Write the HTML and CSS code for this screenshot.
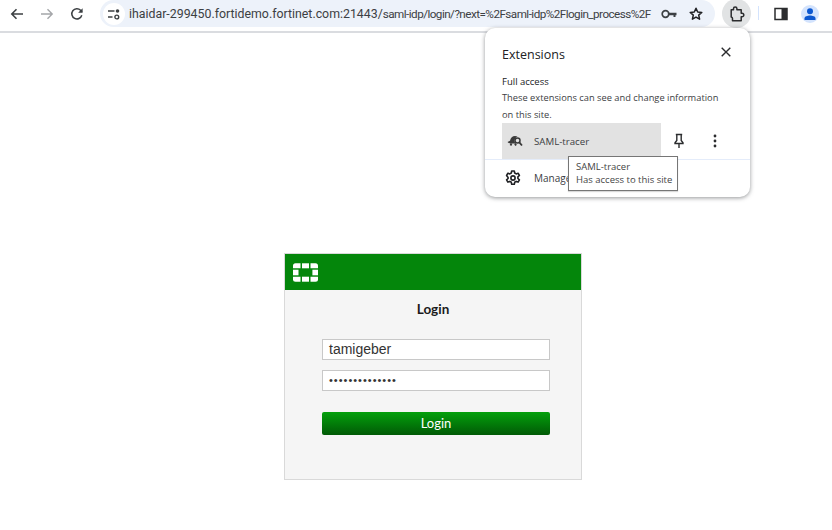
FILE: index.html
```html
<!DOCTYPE html>
<html lang="en">
<head>
<meta charset="utf-8">
<title>Login</title>
<link rel="stylesheet" href="styles.css">
</head>
<body>
<header class="toolbar">
  <button class="tool nav-back" aria-label="Back"><svg width="16" height="16" viewBox="0 0 16 16"><path d="M14 8H3M7.500 3.200 2.800 8l4.700 4.800" fill="none" stroke="#3c4043" stroke-width="1.600"/></svg></button>
  <button class="tool nav-forward" aria-label="Forward"><svg width="16" height="16" viewBox="0 0 16 16"><path d="M2 8h11M8.500 3.200 13.200 8l-4.700 4.800" fill="none" stroke="#a4a6a9" stroke-width="1.400"/></svg></button>
  <button class="tool nav-reload" aria-label="Reload"><svg width="16" height="16" viewBox="0 0 16 16"><path d="M12.800 9.300A5.100 5.100 0 1 1 11.600 4.300L13 5.800" fill="none" stroke="#3c4043" stroke-width="1.500"/><path d="M13.600 2.200v4.500H9.100z" fill="#3c4043"/></svg></button>
  <div class="omnibox">
    <span class="site-info"><svg width="14" height="14" viewBox="0 0 14 14"><path d="M1 4h6.500M1 10h4.500" stroke="#3c4043" stroke-width="1.500" fill="none"/><circle cx="10.500" cy="4" r="1.800" fill="#3c4043"/><circle cx="9.800" cy="10" r="1.900" fill="none" stroke="#3c4043" stroke-width="1.400"/></svg></span>
    <span class="url">ihaidar-299450.fortidemo.fortinet.com:21443/<span class="url-path">saml-idp/login/?next=%2Fsaml-idp%2Flogin_process%2F</span></span>
    <svg class="key" width="16" height="10" viewBox="0 0 16 10"><circle cx="4.500" cy="5" r="3.300" fill="none" stroke="#3c4043" stroke-width="1.700"/><path d="M8 3.800h7.500v2.400h-1v1.800h-2V6.200H8z" fill="#3c4043"/></svg>
    <svg class="star" width="16" height="16" viewBox="0 0 16 16"><path d="M8 2.200 9.700 6l4.100.4-3.100 2.700.9 4.100L8 11.100l-3.600 2.100.9-4.100L2.200 6.400 6.300 6z" fill="none" stroke="#202124" stroke-width="1.500" stroke-linejoin="round"/></svg>
  </div>
  <span class="ext-button"><svg width="18" height="18" viewBox="0 0 18 18"><path d="M3.200 4.800h2.300V3.600a1.700 1.700 0 0 1 3.400 0v1.200h4.300v3.400h.8a1.800 1.800 0 0 1 0 3.600h-.8v3.900H4.500v-2.300a1.500 1.500 0 0 0-1.300-1.500z" fill="none" stroke="#2b2c2e" stroke-width="1.500" stroke-linejoin="round"/></svg></span>
  <span class="divider"></span>
  <svg class="panel" width="14" height="14" viewBox="0 0 14 14"><rect x="1" y="1.500" width="12" height="11" fill="none" stroke="#2b2c2e" stroke-width="1.500"/><rect x="7.500" y="1.500" width="5.500" height="11" fill="#2b2c2e"/></svg>
  <span class="avatar"><svg width="14" height="14" viewBox="0 0 14 14"><circle cx="7" cy="4.300" r="3" fill="#0b57d0"/><path d="M1.500 13v-1.600C1.500 9.400 4.500 8.500 7 8.500s5.500.9 5.500 2.900V13z" fill="#0b57d0"/></svg></span>
</header>

<main class="page">
  <form class="card">
    <div class="card-head">
      <svg width="25" height="19" viewBox="0 0 25 19">
        <g fill="#fff">
          <path d="M2.500.3h5v5H0V2.800A2.500 2.500 0 0 1 2.500.3z"/>
          <rect x="9" y=".3" width="7" height="5"/>
          <path d="M17.500.3h5A2.500 2.500 0 0 1 25 2.800v2.500h-7.500z"/>
          <rect x="0" y="6.700" width="5.500" height="5.600"/>
          <rect x="19.400" y="6.700" width="5.600" height="5.600"/>
          <path d="M0 13.700h7.500v5h-5A2.500 2.500 0 0 1 0 16.200z"/>
          <rect x="9" y="13.700" width="7" height="5"/>
          <path d="M17.500 13.700H25v2.500a2.500 2.500 0 0 1-2.500 2.500h-5z"/>
        </g>
      </svg>
    </div>
    <h1 class="card-title">Login</h1>
    <div class="field">tamigeber</div>
    <div class="field field-pass">••••••••••••••</div>
    <div class="submit">Login</div>
  </form>
</main>

<section class="popup">
  <div class="popup-head">
    <h2>Extensions</h2>
    <svg class="close" width="12" height="12" viewBox="0 0 12 12"><path d="M1.700 1.700l8.600 8.600M10.300 1.700l-8.600 8.600" stroke="#2b2c2e" stroke-width="1.400" fill="none"/></svg>
  </div>
  <div class="popup-body">
    <h3>Full access</h3>
    <p>These extensions can see and change information on this site.</p>
  </div>
  <div class="ext-row">
    <div class="ext-item">
      <svg width="16" height="14" viewBox="0 0 16 14"><path d="M.5 8 3 6.800C3.500 3.800 5.500 2 8 2c1 0 1.900.3 2.500.8A4 4 0 0 0 7.800 8c.1.600.3 1 .6 1.500H4.500C3 9.500 1.500 9.300.5 8z" fill="#3a3a3a"/><circle cx="10.500" cy="6.500" r="2.500" fill="none" stroke="#3a3a3a" stroke-width="1.500"/><path d="M12.300 8.300 15 11.500M4.500 9.500l-1 2M8 9.500l1 2" stroke="#3a3a3a" stroke-width="1.800" fill="none"/></svg>
      <span>SAML-tracer</span>
    </div>
    <svg class="pin" width="12" height="16" viewBox="0 0 12 16"><path d="M2.800 1.500h6.400M3.800 1.500v6L2 9.800v.7h8v-.7L8.200 7.500v-6M6 10.500V15" fill="none" stroke="#2b2c2e" stroke-width="1.400"/></svg>
    <svg class="more" width="4" height="14" viewBox="0 0 4 14"><circle cx="2" cy="2" r="1.400" fill="#2b2c2e"/><circle cx="2" cy="7" r="1.400" fill="#2b2c2e"/><circle cx="2" cy="12" r="1.400" fill="#2b2c2e"/></svg>
  </div>
  <div class="manage">
    <svg width="16" height="16" viewBox="0 0 16 16"><path d="M6.700 1h2.600l.4 2 1.500.9 1.900-.7 1.300 2.300-1.500 1.300v1.700l1.500 1.300-1.300 2.300-1.900-.7-1.500.9-.4 2H6.700l-.4-2-1.500-.9-1.900.7-1.300-2.300 1.500-1.300V7.500L1.600 5.500l1.300-2.300 1.900.7 1.500-.9z" fill="none" stroke="#202124" stroke-width="1.600" stroke-linejoin="round"/><circle cx="8" cy="8" r="2.100" fill="none" stroke="#202124" stroke-width="1.600"/></svg>
    <span>Manage extensions</span>
  </div>
</section>

<div class="tooltip">SAML-tracer<br>Has access to this site</div>
</body>
</html>
```
FILE: styles.css
```css
* { box-sizing: border-box; }
html, body { margin: 0; padding: 0; }
body { width: 832px; height: 530px; overflow: hidden; background: #fff; font-family: "Open Sans", "Noto Sans", sans-serif; color: #202124; }

.toolbar { display: flex; align-items: flex-start; height: 33px; border-bottom: 2px solid #dadce0; background: #fff; }
.tool { width: 30px; height: 27px; margin: 0; padding: 0; border: 0; background: none; display: flex; align-items: center; justify-content: center; }
.nav-back { margin-left: 2px; }
.omnibox { margin-left: 8px; width: 615px; height: 27px; background: #edf2fa; border-radius: 14px; display: flex; align-items: center; padding-left: 3px; }
.site-info { flex: none; width: 22px; height: 22px; border-radius: 50%; background: #fff; display: flex; align-items: center; justify-content: center; }
.url { flex: none; margin-left: 4px; width: 525px; font-family: Roboto, sans-serif; font-size: 12.350px; color: #3c4043; white-space: nowrap; overflow: hidden; }
.url-path { font-size: 11.700px; letter-spacing: -.54px; }
.key { flex: none; margin-left: 7px; }
.star { flex: none; margin-left: 11px; }
.ext-button { margin-left: 7px; width: 29px; height: 29px; border-radius: 50%; background: #e1e3e4; display: flex; align-items: center; justify-content: center; margin-top: -1px; }
.divider { width: 1px; height: 14px; margin: 6px 0 0 7px; background: #d3e3fd; }
.panel { margin: 7px 0 0 15px; }
.avatar { margin: 5px 0 0 13px; width: 18px; height: 18px; border-radius: 50%; background: #d3e3fd; display: flex; align-items: center; justify-content: center; }

.page { padding: 220px 0 0 284px; }
.card { width: 298px; height: 227px; background: #f5f5f5; border: 1px solid #d9d9d9; }
.card-head { height: 36px; background: #04860b; display: flex; align-items: center; padding-left: 8px; }
.card-title { margin: 10px 0 0; text-align: center; font: 700 13.500px/18px Lato, sans-serif; color: #1b1b1b; height: 39px; }
.field { margin: 0 0 0 37px; width: 228px; height: 21px; border: 1px solid #c8c8c8; background: #fff; font: 14px/19px "Liberation Sans", sans-serif; color: #333; padding-left: 6px; }
.field-pass { margin-top: 10px; font-size: 11px; letter-spacing: 1px; }
.submit { margin: 21px 0 0 37px; width: 228px; height: 23px; border-radius: 2px; background: linear-gradient(#04a00c, #015a06); color: #fff; font: 13px/22px Lato, sans-serif; text-align: center; }

.popup { position: absolute; left: 485px; top: 28px; width: 265px; height: 169px; background: #fff; border-radius: 10px; box-shadow: 0 1px 4px rgba(60,64,67,.55); }
.popup-head { display: flex; justify-content: space-between; align-items: flex-start; padding: 18px 18px 0 17px; height: 36px; }
.popup-head h2 { margin: 0; font-size: 12.500px; font-weight: 500; line-height: 18px; color: #202124; }
.close { margin-top: 0; }
.popup-body { padding: 10px 17px 0; }
.popup-body h3 { margin: 0; font-size: 9.500px; font-weight: 500; line-height: 16px; }
.popup-body p { margin: 0; font-size: 9.300px; line-height: 16.500px; color: #3c4043; width: 226px; }
.ext-row { display: flex; align-items: center; height: 37px; padding-left: 17px; border-bottom: 1px solid #e4ecfa; }
.ext-item { width: 159px; height: 36px; background: #e2e2e2; display: flex; align-items: center; padding-left: 5px; font-size: 9.700px; color: #3c4043; gap: 11px; }
.pin { margin-left: 12px; }
.more { margin-left: 28px; }
.manage { display: flex; align-items: center; padding-left: 20px; height: 36px; font-size: 10px; color: #3c4043; gap: 13px; }

.tooltip { position: absolute; left: 568px; top: 156px; width: 110px; height: 35px; background: #fff; border: 1px solid #767676; font-size: 9.500px; line-height: 13px; padding: 3px 0 0 7px; color: #444; box-shadow: 0 1px 1px rgba(0,0,0,.15); white-space: nowrap; }
```
